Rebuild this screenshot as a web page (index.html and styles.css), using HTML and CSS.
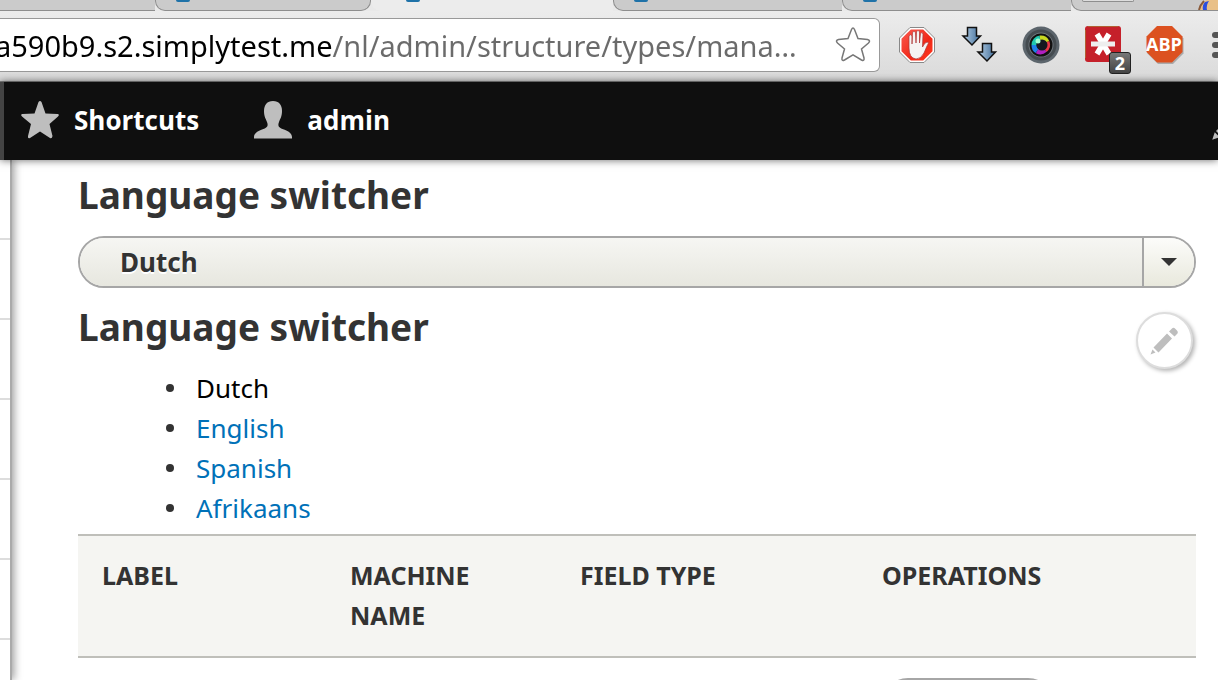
FILE: index.html
```html
<!DOCTYPE html>
<html lang="nl">
<head>
  <meta charset="UTF-8">
  <meta name="viewport" content="width=device-width, initial-scale=1.0">
  <title>Manage fields</title>
  <link rel="stylesheet" href="styles.css">
</head>
<body>
  <header class="browser">
    <div class="tabs">
      <div class="tab tab-first"></div>
      <div class="tab tab-closed"><span class="favicon"></span></div>
      <div class="tab tab-active"><span class="favicon"></span></div>
      <div class="tab"><span class="favicon"></span></div>
      <div class="tab"><span class="favicon"></span></div>
      <div class="tab tab-end">
        <span class="new-tab"></span>
        <svg class="avatar" width="20" height="10" viewBox="0 0 20 10"><path d="M1 10Q3 2 9 0H20V10Z" fill="#e9c088"/><path d="M5 10Q4 5 7 2L11 1Q8 5 9 10Z" fill="#2b4fe0"/><path d="M1 10Q2 5 6 1" fill="none" stroke="#8a5a3a" stroke-width="2"/></svg>
      </div>
    </div>
    <div class="toolbar">
      <div class="omnibox">
        <input type="text" class="url" aria-label="Address" value="a590b9.s2.simplytest.me/nl/admin/structure/types/mana…">
        <button class="icon-button" aria-label="Bookmark">
          <svg width="38" height="38" viewBox="0 0 38 38"><path d="M17.500 3.500Q19 0.500 20.500 3.500L24 12.500L33.500 13.500Q37 14.500 34.500 17L27.500 23L30 32Q30.500 35.500 27.500 34L19 28.800L10.500 34Q7.500 35.500 8 32L10.500 23L3.500 17Q1 14.500 4.500 13.500L14 12.500Z" fill="#fff" stroke="#777" stroke-width="1.500"/></svg>
        </button>
      </div>
      <div class="extensions">
        <button class="icon-button" aria-label="AdBlock">
          <svg width="38" height="38" viewBox="0 0 38 38">
            <defs><linearGradient id="red" x2="1" y2="1"><stop stop-color="#fa5a50"/><stop offset=".6" stop-color="#f02818"/><stop offset="1" stop-color="#ff3a20"/></linearGradient></defs>
            <path d="M12 1.500H26L36.500 12V26L26 36.500H12L1.500 26V12Z" fill="#fff" stroke="#888"/>
            <path d="M12.800 3.500H25.200L34.500 12.800V25.200L25.200 34.500H12.800L3.500 25.200V12.800Z" fill="url(#red)"/>
            <path d="M11 22V10Q12.500 7.500 14 10V18L14.500 6.500Q16 4 17.500 6.500L18 17L18.500 5.500Q20 3.500 21.500 5.500V17L22.500 7.500Q24 5.500 25 8L24.500 21Q27 15.500 30 16Q31 17 29 20L26 27Q23 33 18 33Q11 32 11 22Z" fill="#f5f3f2" stroke="#a33" stroke-width=".7"/>
          </svg>
        </button>
        <button class="icon-button" aria-label="Downloads">
          <svg width="38" height="38" viewBox="0 0 38 38">
            <defs><linearGradient id="blue"><stop stop-color="#b5cfe6"/><stop offset="1" stop-color="#3f6c98"/></linearGradient></defs>
            <path id="arrow" d="M7.500 1.500H16.500V10H20.500L12 19L3 10H7.500Z" fill="url(#blue)" stroke="#111" stroke-width="1.500"/>
            <use href="#arrow" x="15" y="16"/>
          </svg>
        </button>
        <button class="icon-button" aria-label="Camera">
          <svg width="38" height="38" viewBox="0 0 38 38">
            <circle cx="19" cy="19" r="18.500" fill="#5c656c"/><circle cx="19" cy="19" r="14" fill="#6c747a" stroke="#444b50" stroke-width="3"/>
            <circle cx="19" cy="19" r="11.500" fill="#111"/>
            <g fill="none" stroke-width="5"><path d="M12 19A7 7 0 0 1 18 12" stroke="#20c8b0"/><path d="M18 12A7 7 0 0 1 25 16" stroke="#c8d820"/><path d="M25 16A7 7 0 0 1 23 24" stroke="#e83848"/><path d="M23 24A7 7 0 0 1 15 25" stroke="#b020c0"/><path d="M15 25A7 7 0 0 1 12 19" stroke="#2080e8"/></g>
            <circle cx="20" cy="19" r="5.500" fill="#161820"/><circle cx="16" cy="15" r="2.500" fill="#a0ffd0"/>
          </svg>
        </button>
        <button class="icon-button" aria-label="LastPass">
          <svg width="38" height="38" viewBox="0 0 38 38">
            <rect x="1" y="0" width="36" height="36" rx="3" fill="#c5202a"/><path d="M4 .5H34M1.500 4V32" stroke="#b06030"/>
            <path d="M13 8L25 28M25 8L13 28" stroke="#fff" stroke-width="5.500"/><path d="M7 18H31" stroke="#eee" stroke-width="5"/>
          </svg>
          <span class="count">2</span>
        </button>
        <button class="icon-button" aria-label="Adblock Plus">
          <svg width="38" height="38" viewBox="0 0 38 38">
            <path d="M12 2H27L37.500 12.500V27.500L27 38H12L1.500 27.500V12.500Z" fill="#aaa"/><path d="M11 0H26L36.500 10.500V26L26 36.500H11L.5 26V10.500Z" fill="#dc5120"/>
            <text x="18" y="25" class="abp">ABP</text>
          </svg>
        </button>
        <button class="icon-button" aria-label="Menu">
          <svg width="38" height="38" viewBox="0 0 38 38"><path d="M7 9H34M7 19H34M7 29H34" stroke="#555" stroke-width="6" stroke-linecap="round"/></svg>
        </button>
      </div>
    </div>
  </header>

  <nav class="admin-bar">
    <a href="#">
      <svg width="40" height="40" viewBox="0 0 40 40"><path d="M18.500 2Q20 0 21.500 2L25.500 13.500L37.500 14Q40 14.500 38 16.500L29.500 24L32.500 36Q32 39 30 38L20 31.500L10 38Q7.500 39 8 36L11 24L2 16.500Q0 14.500 2.500 14L14.500 13.500Z" fill="#bebebe"/></svg>
      Shortcuts
    </a>
    <a href="#">
      <svg width="40" height="40" viewBox="0 0 40 40"><path d="M20 1C26 1 29 5 29 11C29 17 27 19 26 22C24 27 27 28 31 29.500C36 31 39 34 39 37V38.500H1V37C1 34 4 31 9 29.500C13 28 16 27 14 22C13 19 11 17 11 11C11 5 14 1 20 1Z" fill="#bebebe"/></svg>
      admin
    </a>
    <a href="#" class="edit-mode" aria-label="Edit">
      <svg width="40" height="40" viewBox="0 0 32 32"><path d="M5 27L7 21L11 25ZM8 20L21 7L26 12L13 25ZM22 6Q25 2 28 5Q31 8 27 11Z" fill="#bebebe"/></svg>
    </a>
  </nav>

  <div class="page">
    <aside class="tray"></aside>
    <main class="content">
      <h2>Language switcher</h2>
      <div class="dropbutton">
        <button class="dropbutton-action">Dutch</button>
        <button class="dropbutton-toggle" aria-label="List additional actions"></button>
      </div>
      <section class="switcher">
        <h2>Language switcher</h2>
        <button class="contextual" aria-label="Configure block">
          <svg width="32" height="32" viewBox="0 0 32 32"><path d="M2.500 29.500L4.500 24.500L7.500 27.500ZM5.500 22.500L19 8.500L24 13.500L10.500 27.500ZM21 6.500L24 3.500Q25.500 2 27.500 4L29 5.500Q30.500 7 29.500 8.500L26.500 11.500Z" fill="#bebebe"/></svg>
        </button>
        <ul>
          <li><a href="#" class="is-active">Dutch</a></li>
          <li><a href="#">English</a></li>
          <li><a href="#">Spanish</a></li>
          <li><a href="#">Afrikaans</a></li>
        </ul>
      </section>
      <table>
        <thead>
          <tr>
            <th class="col-label">Label</th>
            <th class="col-name">Machine name</th>
            <th class="col-type">Field type</th>
            <th>Operations</th>
          </tr>
        </thead>
        <tbody>
          <tr>
            <td></td>
            <td></td>
            <td></td>
            <td><button class="operation" aria-label="Edit field"></button></td>
          </tr>
        </tbody>
      </table>
    </main>
  </div>
</body>
</html>
```
FILE: styles.css
```css
* { box-sizing: border-box; }
body {
  margin: 0;
  height: 100vh;
  overflow: hidden;
  display: flex;
  flex-direction: column;
  background: #fff;
  color: #333;
  font-family: "Noto Sans", sans-serif;
  font-size: 26px;
  line-height: 40px;
}
button { padding: 0; border: none; background: none; font: inherit; color: inherit; cursor: pointer; }
a { color: #0071b8; text-decoration: none; }
svg { display: block; }

/* browser window */
.browser { flex: none; background: linear-gradient(#efefef, #dadada); border-bottom: 1px solid #888; }
.tabs { display: flex; height: 11px; background: #e9e9e9; }
.tab {
  flex: 0 0 229px;
  padding-left: 20px;
  border: 1px solid #8e8e8e;
  border-width: 0 0 1px 1px;
  border-bottom-left-radius: 10px;
  background: #cbcbcb;
}
.tab-first { flex-basis: 155px; border-left: none; border-radius: 0; }
.tab-closed { flex-basis: 216px; border-right-width: 1px; border-bottom-right-radius: 10px; }
.tab-active { flex-basis: 242px; padding-left: 34px; border-color: transparent; background: #ececec; }
.tab-end { flex: 1; display: flex; justify-content: space-between; padding-left: 10px; }
.favicon { display: block; width: 14px; height: 2px; border-radius: 0 0 4px 4px; background: #1f72a8; }
.new-tab { width: 52px; height: 2px; border: 1px solid #8e8e8e; border-top: none; border-radius: 0 0 4px 4px; background: #ddd; }
.toolbar { display: flex; align-items: center; height: 70px; padding-bottom: 2px; }
.omnibox {
  flex: 1;
  display: flex;
  align-items: center;
  height: 54px;
  padding-right: 7px;
  border: 1px solid #999;
  border-left: none;
  border-radius: 0 6px 6px 0;
  background: #fff;
}
.url {
  flex: 1;
  min-width: 0;
  height: 44px;
  margin-left: -5px;
  padding: 0;
  border: none;
  outline: none;
  font: 29px "Noto Sans", sans-serif;
  color: transparent;
  background: linear-gradient(90deg, #000 338px, #6b6b6b 338px);
  background-clip: text;
  -webkit-background-clip: text;
}
.extensions { display: flex; gap: 24px; width: 338px; padding: 12px 0 12px 18px; overflow: hidden; }
.icon-button { position: relative; flex: none; }
.count {
  position: absolute;
  right: -9px;
  bottom: -10px;
  width: 22px;
  height: 22px;
  border: 1px solid #222;
  border-radius: 3px;
  background: linear-gradient(#777, #444);
  color: #fff;
  font: bold 18px/20px "Open Sans", sans-serif;
}
.abp { fill: #fff; font: bold 18px "Open Sans", sans-serif; text-anchor: middle; }

/* admin toolbar */
.admin-bar {
  position: relative;
  z-index: 1;
  flex: none;
  display: flex;
  gap: 54px;
  height: 78px;
  padding: 0 0 2px 16px;
  border-left: 4px solid #444;
  background: #0f0f0f;
  box-shadow: 0 0 8px rgba(0, 0, 0, 0.6);
  overflow: hidden;
}
.admin-bar a { display: flex; align-items: center; gap: 14px; color: #fff; font: bold 26px "Open Sans", sans-serif; }
.admin-bar .edit-mode { position: absolute; top: 24px; right: -28px; }

/* page */
.page { flex: 1; display: flex; min-height: 0; }
.tray {
  flex: none;
  width: 12px;
  border-right: 2px solid #aaa;
  background: repeating-linear-gradient(#fff 0 78px, #ddd 78px 80px);
  box-shadow: 2px 0 8px rgba(0, 0, 0, 0.4);
}
.content { flex: 1; padding: 14px 22px 0 66px; }
h2 { margin: 0; font-size: 37px; line-height: 42px; }
.dropbutton {
  display: flex;
  height: 52px;
  margin: 20px 0 18px;
  border: 2px solid #a6a6a6;
  border-radius: 26px;
  overflow: hidden;
}
.dropbutton-action {
  flex: 1;
  padding-left: 40px;
  background: linear-gradient(#f6f6f3, #e7e7df);
  font-weight: bold;
  text-align: left;
  text-shadow: 0 2px #fff;
}
.dropbutton-toggle {
  display: flex;
  align-items: center;
  justify-content: center;
  width: 52px;
  border-left: 2px solid #a6a6a6;
  background: linear-gradient(#fcfcfa, #e9e9dd);
}
.dropbutton-toggle::before { content: ""; border: 8px solid transparent; border-top-color: #333; border-bottom: none; }
.switcher { position: relative; }
.contextual {
  position: absolute;
  top: 6px;
  right: 3px;
  width: 57px;
  height: 57px;
  padding: 10px;
  border: 2px solid #ddd;
  border-radius: 50%;
  background: #fff;
  box-shadow: 2px 2px 4px rgba(0, 0, 0, 0.3);
}
ul { margin: 20px 0 6px; padding-left: 88px; list-style: none; }
li { display: flex; align-items: center; gap: 22px; }
li::before { content: ""; width: 8px; height: 8px; border-radius: 50%; background: #333; }
.is-active { color: #000; }
table { width: 100%; border-collapse: collapse; table-layout: fixed; }
th {
  padding: 19px 24px 21px;
  border: 2px solid #bfbfba;
  border-width: 2px 0;
  background: #f5f5f2;
  font-size: 25px;
  text-align: left;
  text-transform: uppercase;
  vertical-align: top;
}
.col-label { width: 248px; }
.col-name { width: 230px; }
.col-type { width: 302px; }
td { padding: 20px 24px; }
.operation { width: 172px; height: 52px; border: 2px solid #a6a6a6; border-radius: 26px; background: #f6f6f3; }
```
